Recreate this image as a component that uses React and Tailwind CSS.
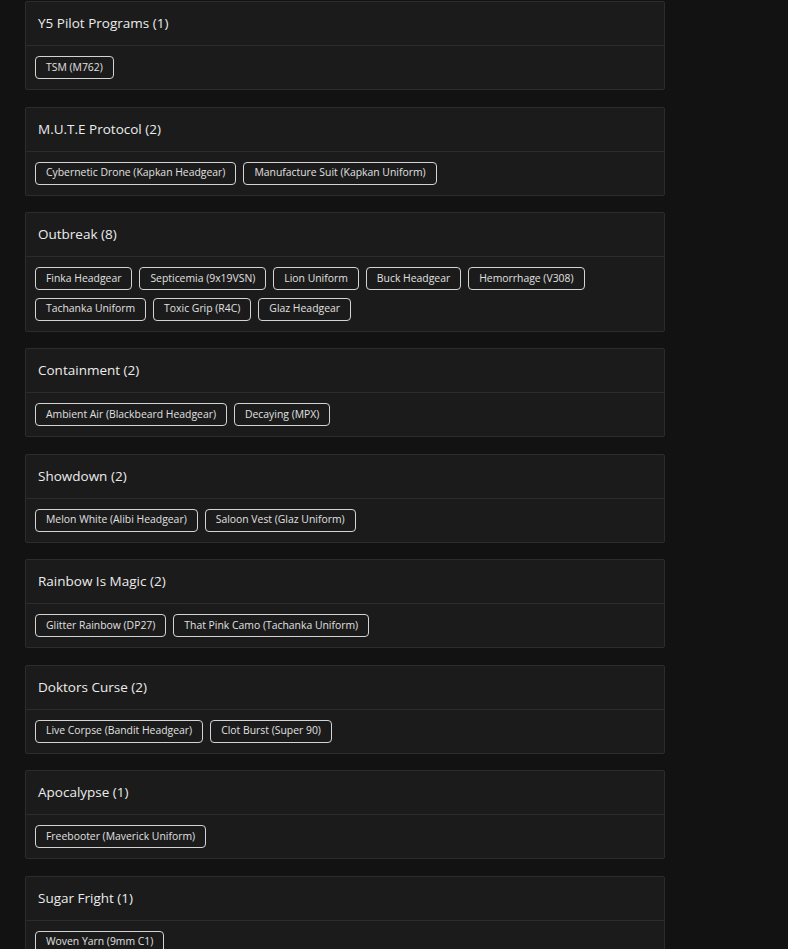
import React from 'react'

const events = [
    { name: 'Y5 Pilot Programs', items: ['TSM (M762)'] },
    { name: 'M.U.T.E Protocol', items: ['Cybernetic Drone (Kapkan Headgear)', 'Manufacture Suit (Kapkan Uniform)'] },
    {
        name: 'Outbreak',
        items: [
            'Finka Headgear',
            'Septicemia (9x19VSN)',
            'Lion Uniform',
            'Buck Headgear',
            'Hemorrhage (V308)',
            'Tachanka Uniform',
            'Toxic Grip (R4C)',
            'Glaz Headgear',
        ],
    },
    { name: 'Containment', items: ['Ambient Air (Blackbeard Headgear)', 'Decaying (MPX)'] },
    { name: 'Showdown', items: ['Melon White (Alibi Headgear)', 'Saloon Vest (Glaz Uniform)'] },
    { name: 'Rainbow Is Magic', items: ['Glitter Rainbow (DP27)', 'That Pink Camo (Tachanka Uniform)'] },
    { name: 'Doktors Curse', items: ['Live Corpse (Bandit Headgear)', 'Clot Burst (Super 90)'] },
    { name: 'Apocalypse', items: ['Freebooter (Maverick Uniform)'] },
    { name: 'Sugar Fright', items: ['Woven Yarn (9mm C1)'] },
]

const EventCard = ({ event }) => (
    <div className="bg-[#1b1b1b] border border-[#2c2c2c] rounded-[2px]">
        <div className="h-[44px] flex items-center px-3 border-b border-[#2c2c2c]">
            <h3 className="text-[13.5px] font-medium text-[#ececec]">
                {event.name} ({event.items.length})
            </h3>
        </div>
        <div className="flex flex-wrap gap-x-[7px] gap-y-[7.5px] px-[9px] py-[10px]">
            {event.items.map((item, i) => (
                <span
                    key={i}
                    className="h-[23px] flex items-center px-[10px] border border-[#d4d4d4] rounded-[4px] text-[10.4px] text-[#e0e0e0]"
                >
                    {item}
                </span>
            ))}
        </div>
    </div>
)

export default function App() {
    return (
        <div
            className="bg-[#121212] min-h-screen pt-px pl-[25px]"
            style={{ fontFamily: '"Open Sans", "Liberation Sans", sans-serif' }}
        >
            <div className="w-[640px] flex flex-col gap-[16.5px]">
                {events.map((event, i) => (
                    <EventCard key={i} event={event} />
                ))}
            </div>
        </div>
    )
}
